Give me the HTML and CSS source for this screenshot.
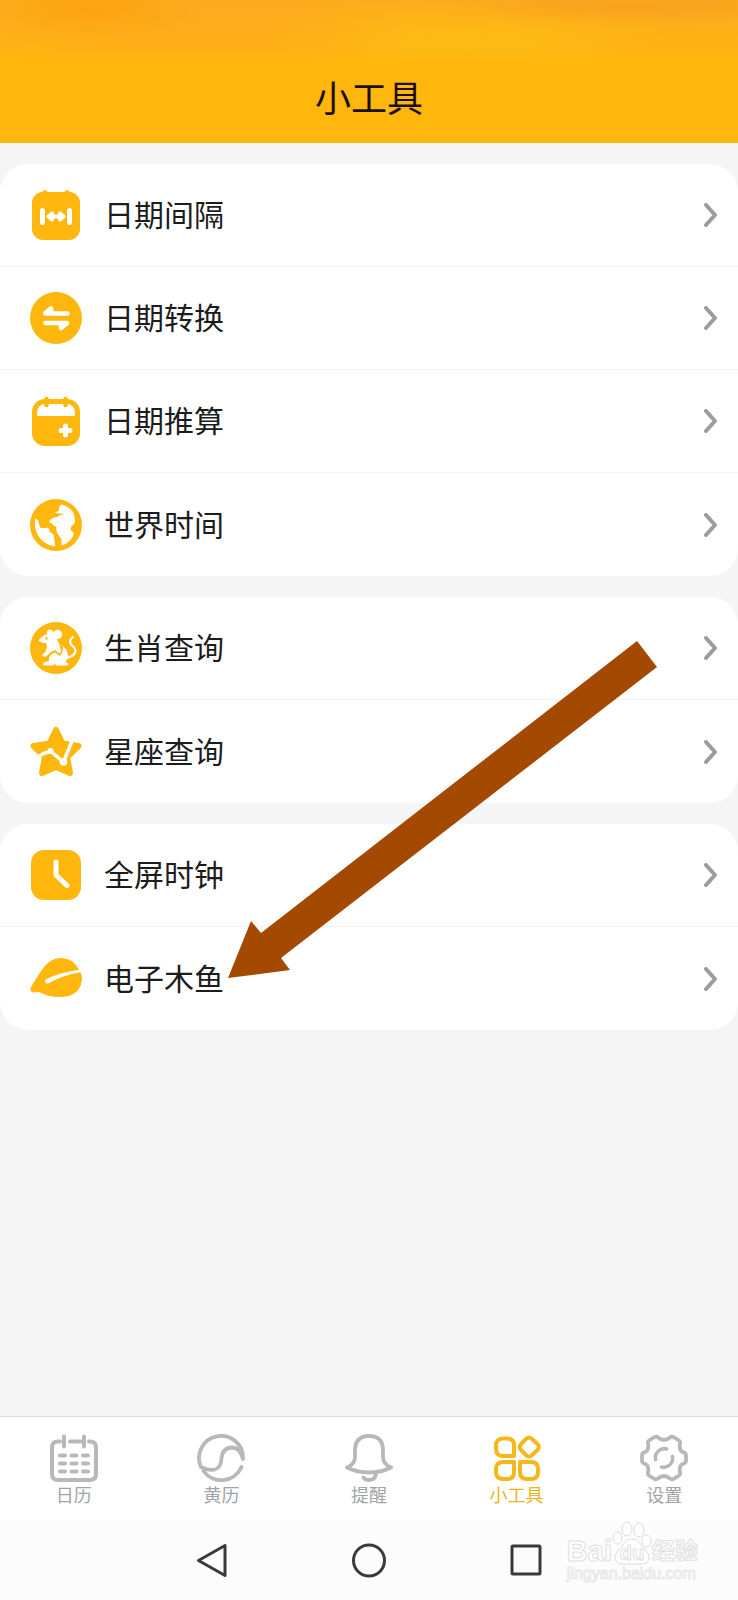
FILE: index.html
```html
<!DOCTYPE html>
<html lang="zh-CN">
<head>
    <meta charset="UTF-8">
    <meta name="viewport" content="width=device-width, initial-scale=1.0">
    <title>小工具</title>
    <link rel="stylesheet" href="styles.css">
</head>
<body>

    <header class="header">
        <div class="status-bar"></div>
        <h1>小工具</h1>
    </header>

    <main class="tools">
        <section class="card">
            <a href="#" class="row">
                <svg class="icon" viewBox="0 0 52 52">
                    <rect x="2" y="3" width="48" height="48" rx="11" fill="#ffb70d"/>
                    <path d="M11 6 Q12 1 15.500 1 Q17 3 19 3 H33 Q35 3 36.500 1 Q40 1 41 6Z" fill="#ffb70d"/>
                    <path d="M12.500 21.500v12M39.500 21.500v12" stroke="#fff" stroke-width="5" stroke-linecap="round"/>
                    <path d="M20 27.500h12M22 24.500 18.500 27.500l3.500 3M30 24.500l3.500 3-3.500 3" fill="none" stroke="#fff" stroke-width="4" stroke-linecap="round" stroke-linejoin="round"/>
                </svg>
                <span>日期间隔</span>
                <svg class="chevron" viewBox="0 0 14 24"><path d="M2 2l9 10-9 10"/></svg>
            </a>
            <a href="#" class="row">
                <svg class="icon" viewBox="0 0 52 52">
                    <circle cx="26" cy="26" r="26" fill="#ffb70d"/>
                    <path d="M15.500 21.500h22M15.500 21l5.500-4.500v5zM37 31H15.500M36.500 31.500l-5.500 4.500v-5z" fill="#fff" stroke="#fff" stroke-width="4.600" stroke-linecap="round" stroke-linejoin="round"/>
                </svg>
                <span>日期转换</span>
                <svg class="chevron" viewBox="0 0 14 24"><path d="M2 2l9 10-9 10"/></svg>
            </a>
            <a href="#" class="row">
                <svg class="icon" viewBox="0 0 52 52">
                    <rect x="2" y="4" width="48" height="47" rx="13" fill="#ffb70d"/>
                    <path d="M7 21v-3q0-9 9-9h20q9 0 9 9v3z" fill="#fff"/>
                    <path d="M16.500 4v6M35.500 4v6" stroke="#ffb70d" stroke-width="4.500" stroke-linecap="round"/>
                    <path d="M35.500 31v9M31 35.500h9" stroke="#fff" stroke-width="5" stroke-linecap="round"/>
                </svg>
                <span>日期推算</span>
                <svg class="chevron" viewBox="0 0 14 24"><path d="M2 2l9 10-9 10"/></svg>
            </a>
            <a href="#" class="row">
                <svg class="icon" viewBox="0 0 52 52">
                    <circle cx="26" cy="26" r="26" fill="#ffb70d"/>
                    <path d="M25 13q4 0 4-3 0-3 2-4.500 9 2 13 9.500l1 7q0 3-3.500 5l-1 4q4 2 3 5-2 5-8 9l-4 1.500 0-6-4-6q-2-4-1-7-3 0-4.500-3l-3-1.500q1-3.500 5.500-4.500 3 0 5-2l4.500-1-3-1q-6 0-6-1.500z" fill="#fff"/>
                    <path d="M5 20q3 0 3.500 2.500l1.500 6q3 1 8 0 2 2 1 4 5 2 5 5l1 9v1Q14 46 8 36.500 4 29 5 20z" fill="#fff"/>
                </svg>
                <span>世界时间</span>
                <svg class="chevron" viewBox="0 0 14 24"><path d="M2 2l9 10-9 10"/></svg>
            </a>
        </section>

        <section class="card">
            <a href="#" class="row">
                <svg class="icon" viewBox="0 0 52 52">
                    <circle cx="26" cy="26" r="26" fill="#ffb70d"/>
                    <circle cx="20" cy="10.500" r="3" fill="#fff"/>
                    <circle cx="27.500" cy="12.500" r="4.700" fill="#fff"/>
                    <path d="M8.500 18.500q3.500-5 8.500-6.500 6-1 9 4l3 5 2 8-1 3-5-4-4 2-5 4.500-3.500 0 0-2 3-3 1.500-4.500-1-4q-5 0-7.500-2.500z" fill="#fff"/>
                    <path d="M31 23q7 4 7 11 0 4-3 6l3 1q1 1.500-.5 2.500H26l-1.500-2-1 2H14q-2-1-.5-3l5.500-1.500q-1-4 3-7l3-1.500 5 3.500q4-4 2.500-11z" fill="#fff"/>
                    <circle cx="16.500" cy="16.500" r="1.200" fill="#ffb70d"/>
                    <path d="M36 36q10-2 9.500-8-.5-2-4-5-3.500-4 1.500-8" fill="none" stroke="#fff" stroke-width="2.200" stroke-linecap="round"/>
                </svg>
                <span>生肖查询</span>
                <svg class="chevron" viewBox="0 0 14 24"><path d="M2 2l9 10-9 10"/></svg>
            </a>
            <a href="#" class="row">
                <svg class="icon" viewBox="0 0 52 52">
                    <path d="M26 4l6.500 13.500L48.500 20 37 31l3 16-14-6-14 6 3-16L3.500 20l16-2.500z" fill="#ffb70d" stroke="#ffb70d" stroke-width="6" stroke-linejoin="round"/>
                    <path d="M7 31l8-4 6-1.500L33.500 36 44 10" fill="none" stroke="#fff" stroke-width="3.500"/>
                    <circle cx="20.500" cy="25" r="3" fill="#fff"/>
                    <circle cx="33.500" cy="36" r="3.800" fill="#fff"/>
                </svg>
                <span>星座查询</span>
                <svg class="chevron" viewBox="0 0 14 24"><path d="M2 2l9 10-9 10"/></svg>
            </a>
        </section>

        <section class="card">
            <a href="#" class="row">
                <svg class="icon" viewBox="0 0 52 52">
                    <rect x="1" y="1" width="50" height="50" rx="13" fill="#ffb70d"/>
                    <path d="M26 13V26l11 10.500" fill="none" stroke="#fff" stroke-width="5" stroke-linecap="round" stroke-linejoin="round"/>
                </svg>
                <span>全屏时钟</span>
                <svg class="chevron" viewBox="0 0 14 24"><path d="M2 2l9 10-9 10"/></svg>
            </a>
            <a href="#" class="row">
                <svg class="icon" viewBox="0 0 52 52">
                    <path d="M1 34Q6 26 11 18 19 5 31 5q12 0 18 11.500 3 4 3 9-1 18-22 18.500-12 0-21-5l-6 .5q-4-1-2-5.500z" fill="#ffb70d"/>
                    <path d="M15.500 27Q30 19.500 52 17v1.500q-18 2.500-34 11.500-3.500 0-2.500-3z" fill="#fff" stroke="#fff" stroke-width="1"/>
                </svg>
                <span>电子木鱼</span>
                <svg class="chevron" viewBox="0 0 14 24"><path d="M2 2l9 10-9 10"/></svg>
            </a>
        </section>

        <svg class="arrow" viewBox="0 0 429 338">
            <path d="M0 337L23 280l10 12L409 0l20 26L53 317l9 12z" fill="#a34a00"/>
        </svg>
    </main>

    <nav class="tab-bar">
        <a href="#" class="tab">
            <svg viewBox="0 0 48 48">
                <path d="M10 7.500H8q-6 0-6 6V40q0 6 6 6h32q6 0 6-6V13.500q0-6-6-6h-1M20 7.500h11M14 2.500v10M34 2.500v10" stroke-width="4"/>
                <path d="M10 21.500h5M21.500 21.500h5M33 21.500h5M10 29.500h5M21.500 29.500h5M33 29.500h5M10 37.500h5M21.500 37.500h5M33 37.500h5" stroke-width="4"/>
            </svg>
            <span>日历</span>
        </a>
        <a href="#" class="tab">
            <svg viewBox="0 0 48 48">
                <path d="M46 25A22 22 0 1 0 4 33q7 4 14 2.500 6-2 6.500-11.500 1-10 10.500-10.500 8 0 11 11.500M6.500 37A22 22 0 0 0 44.500 33" stroke-width="3.800"/>
            </svg>
            <span>黄历</span>
        </a>
        <a href="#" class="tab">
            <svg viewBox="0 0 48 48">
                <path d="M24 2q-14 0-14 15v6q0 7-8 10.500 10 5 22 5t22-5Q38 30 38 23v-6Q38 2 24 2zM31 40q-1 6-7 6-4 0-5.500-2.500" stroke-width="3.800"/>
            </svg>
            <span>提醒</span>
        </a>
        <a href="#" class="tab active">
            <svg viewBox="0 0 48 48">
                <path d="M11 4.500h3.500q6.500 0 6.500 7V22H10.500Q3 22 3 14.500v-3q0-7 8-7zM33.500 4.500q2.500-2 5 0L44.500 10q2.500 3 0 6L38.500 21.500q-2.500 2-5 0L28 16q-2.500-3 0-6zM10.500 28H21v10q0 7-6.500 7h-4Q3 45 3 38v-3q0-7 7.500-7zM27 28h11q7 0 7 7v3q0 7-7 7h-4q-7 0-7-7z" stroke-width="4"/>
            </svg>
            <span>小工具</span>
        </a>
        <a href="#" class="tab">
            <svg viewBox="0 0 48 48">
                <path d="M14.500 3q2-1 3.500.5 6 5 12 0Q31.500 2 33.500 3l5.500 3.500q1.500 1 1 3-1.500 7.500 4 9 2 1 2 3v5q0 2-2 3-5.500 1.500-4 9 .5 2-1 3L33.500 45q-2 1-3.500-.5-6-5-12 0Q16.500 46 14.500 45L9 41.500q-1.500-1-1-3 1.500-7.500-4-9-2-1-2-3v-5q0-2 2-3 5.500-1.500 4-9-.5-2 1-3z" stroke-width="3.800"/>
                <path d="M28 15.500A9 9 0 0 0 16 27M20 32.500A9 9 0 0 0 32 21" stroke-width="3.500" stroke-linecap="butt"/>
            </svg>
            <span>设置</span>
        </a>
    </nav>

    <footer class="system-bar">
        <button class="sys-btn" aria-label="返回">
            <svg viewBox="0 0 36 36"><path d="M31 2.500v30L4.500 17.500z"/></svg>
        </button>
        <button class="sys-btn" aria-label="主页">
            <svg viewBox="0 0 36 36"><circle cx="18" cy="17.500" r="15.500"/></svg>
        </button>
        <button class="sys-btn" aria-label="最近任务">
            <svg viewBox="0 0 36 36"><rect x="4" y="3" width="28" height="28" rx="1"/></svg>
        </button>
        <div class="watermark">
            <div class="brand">
                <span>Bai</span>
                <span class="paw">
                    <svg viewBox="0 0 40 44">
                        <path d="M20 18q-6 0-9 6-2 3-5 6-4 4-3 8 2 5 8 5h18q6 0 8-5 1-4-3-8-3-3-5-6-3-6-9-6z"/>
                        <ellipse cx="5.500" cy="17" rx="4.500" ry="6"/>
                        <ellipse cx="15" cy="8" rx="5" ry="7"/>
                        <ellipse cx="27" cy="9" rx="5" ry="7"/>
                        <ellipse cx="34.500" cy="20" rx="4.500" ry="6"/>
                    </svg>
                    <span class="du">du</span>
                </span>
                <span class="jingyan">经验</span>
            </div>
            <div class="url">jingyan.baidu.com</div>
        </div>
    </footer>

</body>
</html>
```
FILE: styles.css
```css
* {
    box-sizing: border-box;
}

body {
    margin: 0;
    min-height: 100vh;
    display: flex;
    flex-direction: column;
    background-color: #f5f5f5;
    font-family: "Noto Sans CJK SC", sans-serif;
    color: #1c1c1c;
}

a {
    color: inherit;
    text-decoration: none;
}

.header {
    background-color: #ffb70d;
    height: 143px;
}

.status-bar {
    height: 66px;
    background:
        linear-gradient(transparent 70%, #ffb70d),
        radial-gradient(ellipse 110px 30px at 12% 14%, rgba(255, 155, 0, 0.5), transparent),
        radial-gradient(ellipse 220px 60px at 28% 50%, rgba(253, 165, 30, 0.4), transparent),
        radial-gradient(ellipse 220px 20px at 86% 10%, rgba(248, 155, 30, 0.6), transparent),
        radial-gradient(ellipse 220px 40px at 62% 60%, rgba(252, 190, 20, 0.8), transparent),
        linear-gradient(#fbac1e, #ffb50f);
}

.header h1 {
    margin: 0;
    font-size: 36px;
    font-weight: 400;
    line-height: 60px;
    text-align: center;
    color: #1a0f05;
}

.tools {
    flex: 1;
    display: flex;
    flex-direction: column;
    gap: 21px;
    padding: 21px 0;
    position: relative;
}

.card {
    background-color: #fff;
    border-radius: 28px;
    overflow: hidden;
}

.row {
    display: flex;
    align-items: center;
    height: 103px;
    padding: 0 20px 0 30px;
    font-size: 30px;
    border-bottom: 1px solid #f3f3f3;
}

.row:last-child {
    border-bottom: none;
}

.row .icon {
    width: 52px;
    height: 52px;
    margin-right: 22px;
}

.row span {
    flex: 1;
    padding-bottom: 4px;
}

.chevron {
    width: 14px;
    height: 24px;
    fill: none;
    stroke: #9c9c9c;
    stroke-width: 4;
    stroke-linecap: round;
    stroke-linejoin: round;
}

/* pointer drawn over the list */
.arrow {
    position: absolute;
    left: 228px;
    top: 498px;
    width: 429px;
    height: 338px;
    pointer-events: none;
}

.tab-bar {
    display: flex;
    height: 105px;
    background-color: #fff;
    border-top: 1px solid #dcdcdc;
}

.tab {
    flex: 1;
    display: flex;
    flex-direction: column;
    align-items: center;
    padding-top: 17px;
    font-size: 18px;
    line-height: 24px;
    color: #a0a4a6;
}

.tab svg {
    width: 48px;
    height: 48px;
    fill: none;
    stroke: #b8b8b8;
    stroke-linecap: round;
    stroke-linejoin: round;
}

.tab.active {
    color: #eeb422;
}

.tab.active svg {
    stroke: #f5b71c;
}

.system-bar {
    position: relative;
    display: flex;
    justify-content: center;
    height: 79px;
    background-color: #fcfcfc;
}

.sys-btn {
    width: 157px;
    padding: 0;
    border: none;
    background: none;
    cursor: pointer;
}

.sys-btn svg {
    display: block;
    width: 36px;
    height: 36px;
    margin: 0 auto;
    fill: none;
    stroke: #3a3a3a;
    stroke-width: 3;
    stroke-linejoin: round;
}

.watermark {
    position: absolute;
    right: 40px;
    top: 0;
    font-family: "Liberation Sans", "Noto Sans CJK SC", sans-serif;
    color: #fff;
    -webkit-text-stroke: 1px #e0e0e0;
}

.brand {
    display: flex;
    align-items: flex-end;
    font-size: 29px;
    font-weight: 700;
    line-height: 28px;
    height: 44px;
}

.paw {
    position: relative;
    width: 40px;
    height: 44px;
}

.paw svg {
    display: block;
    width: 40px;
    height: 44px;
    fill: #fff;
    stroke: #dcdcdc;
}

.du {
    position: absolute;
    left: 0;
    right: 0;
    bottom: 0;
    font-size: 20px;
    line-height: 24px;
    text-align: center;
}

.jingyan {
    font-size: 23px;
}

.url {
    font-size: 16px;
    line-height: 18px;
    -webkit-text-stroke: 1px #e8e8e8;
}
```
